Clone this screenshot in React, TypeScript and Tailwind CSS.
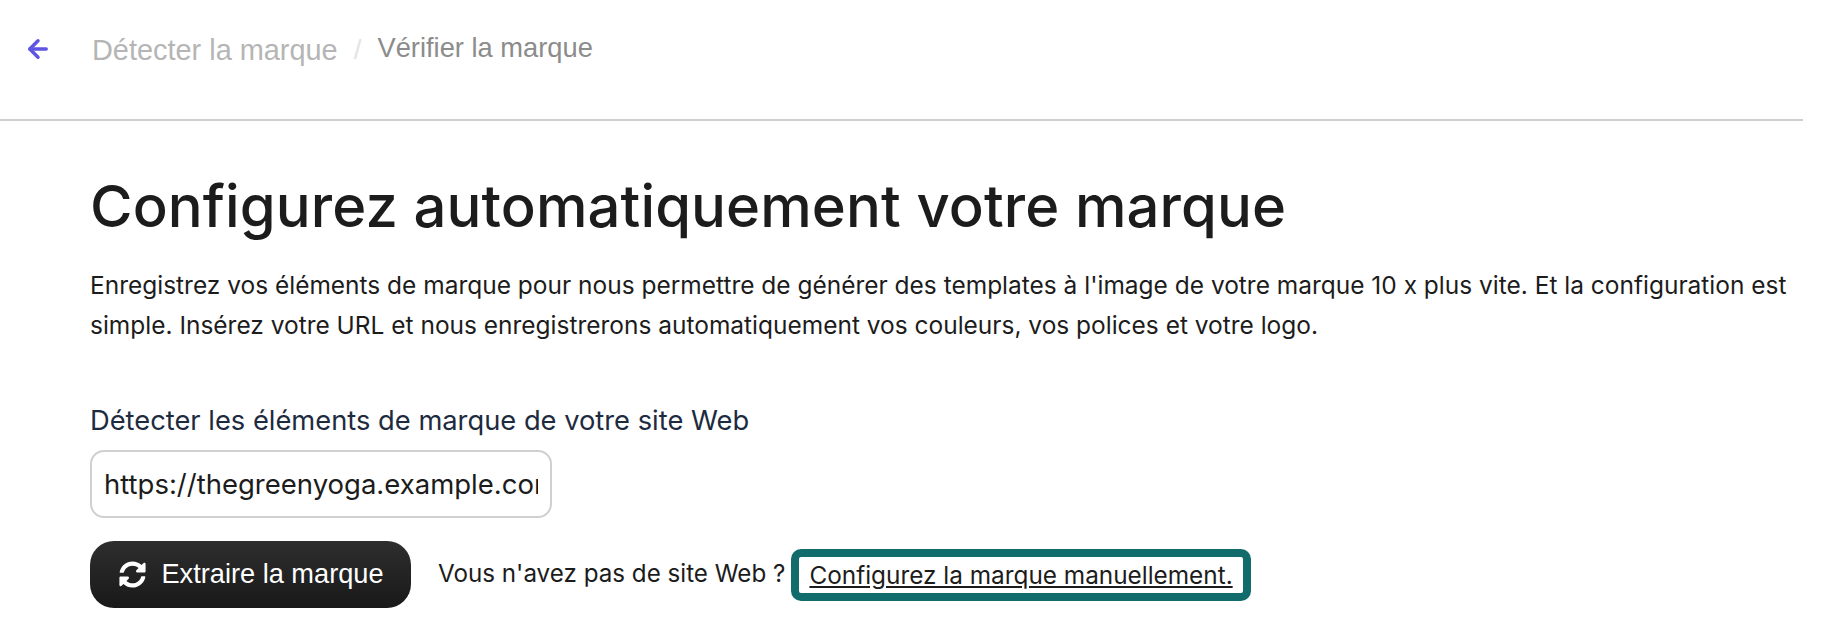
import { ArrowLeft } from "lucide-react"
import { FaSyncAlt } from "react-icons/fa"

export default function App() {
    return (
        <div className="min-h-screen bg-white pr-[27px] font-['Inter',sans-serif] text-[#1c1c1c]">
            {/* Breadcrumb header */}
            <header className="flex h-[121px] items-start border-b-2 border-[#cfcfcf] pl-[24px] pt-[30px]">
                <ArrowLeft className="mt-[5px] h-[28px] w-[28px] text-[#5f55e3]" strokeWidth={3} />
                <div className="ml-[40px] flex items-start font-['Liberation_Sans',sans-serif] leading-[40px]">
                    <span className="text-[28.9px] text-[#b5b5b5]">Détecter la marque</span>
                    <span className="mx-[16px] text-[28px] text-[#e4e4e4]">/</span>
                    <span className="-mt-[2px] text-[27.3px] text-[#8c8c8c]">Vérifier la marque</span>
                </div>
            </header>

            <main className="pl-[90px]">
                <h1 className="mt-[50px] font-['Inter',sans-serif] text-[58px] leading-[70px] font-medium tracking-[0.1px]">
                    Configurez automatiquement votre marque
                </h1>
                <p className="mt-[24px] text-[24.48px] leading-[40px]">
                    Enregistrez vos éléments de marque pour nous permettre de générer des templates à l'image de votre marque 10 x plus vite. Et la configuration est simple. Insérez votre URL et nous enregistrerons automatiquement vos couleurs, vos polices et votre logo.
                </p>

                <label className="mt-[56px] block text-[27.3px] leading-[40px] text-[#1e2b3f]">
                    Détecter les éléments de marque de votre site Web
                </label>
                <input
                    readOnly
                    value="https://thegreenyoga.example.com/"
                    className="mt-[9px] block h-[68px] w-[462px] rounded-[14px] border-2 border-[#d0d0d0] px-[12px] text-[27.5px] text-[#1c1c1c] outline-none"
                />

                <div className="mt-[23px] flex items-center">
                    <button className="flex h-[67px] w-[321px] items-center justify-center gap-[15px] rounded-[24px] bg-gradient-to-b from-[#2e2e2e] to-[#191919] pl-[2px] font-['Liberation_Sans',sans-serif] text-[27.2px] text-white">
                        <FaSyncAlt className="h-[27px] w-[27px]" />
                        Extraire la marque
                    </button>
                    <span className="ml-[27px] text-[24.2px]">Vous n'avez pas de site Web ?</span>
                    <a className="ml-[6px] rounded-[10px] border-[8px] border-[#136c6c] px-[10px] text-[24.35px] leading-[36px] underline">
                        Configurez la marque manuellement.
                    </a>
                </div>
            </main>
        </div>
    )
}
